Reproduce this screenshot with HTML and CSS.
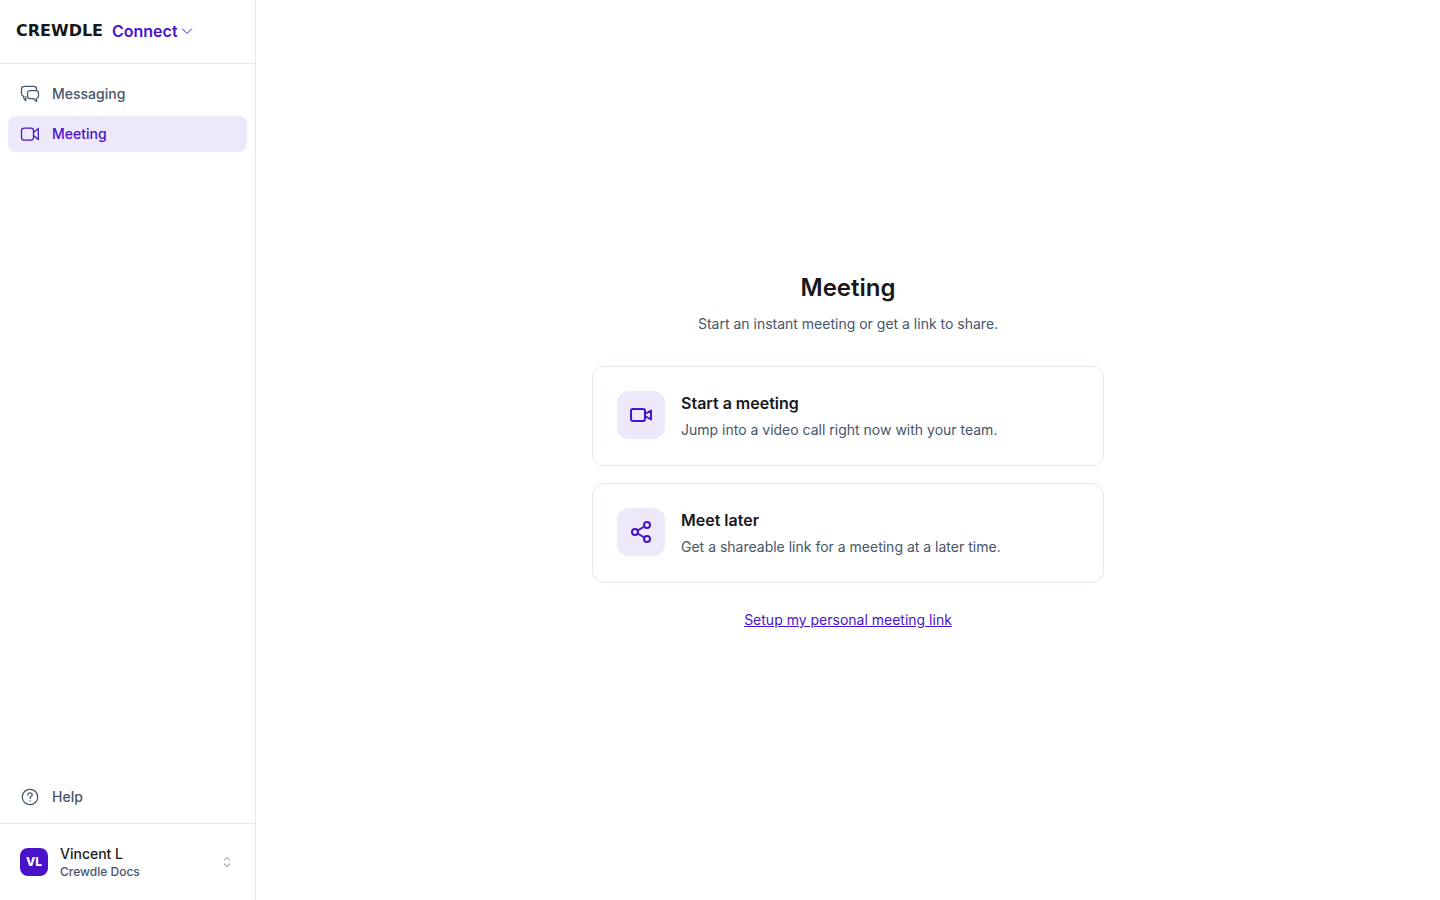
FILE: index.html
```html
<!DOCTYPE html>
<html lang="en">
<head>
  <meta charset="UTF-8">
  <meta name="viewport" content="width=device-width, initial-scale=1.0">
  <title>Crewdle Connect - Meeting</title>
  <link rel="stylesheet" href="styles.css">
</head>
<body>
  <!-- Sidebar -->
  <aside class="sidebar">
    <header class="sidebar-header">
      <button type="button" class="product-switch">
        <span class="logo">CREWDLE</span>
        <span class="product">Connect</span>
        <svg class="chevron" width="12" height="12" viewBox="0 0 12 12"><path d="M1.500 4 6 8.500 10.500 4"/></svg>
      </button>
    </header>

    <nav class="nav">
      <a href="#messaging" class="nav-item">
        <svg class="icon" width="20" height="20" viewBox="0 0 20 20">
          <path d="M5.800 12.500V16.500L3.800 14.500V12.300C2.300 11.900 1.500 10.900 1.500 9.500V5C1.500 3.200 2.700 2.300 4.500 2.300H13.500C15.300 2.300 16.500 3.200 16.500 5V6.300"/>
          <path d="M10 6.500H16C17.600 6.500 18.500 7.400 18.500 9V12C18.500 13.400 17.800 14.200 16.500 14.500V17.500L13.500 14.500H10C8.400 14.500 7.500 13.600 7.500 12V9C7.500 7.400 8.400 6.500 10 6.500Z"/>
        </svg>
        Messaging
      </a>
      <a href="#meeting" class="nav-item active">
        <svg class="icon" width="20" height="20" viewBox="0 0 20 20">
          <rect x="1.500" y="4" width="12" height="12" rx="2.500"/>
          <path d="M13.500 8.500 18.300 4.500V15.500L13.500 11.500"/>
        </svg>
        Meeting
      </a>
    </nav>

    <nav class="nav nav-bottom">
      <a href="#help" class="nav-item">
        <svg class="icon" width="20" height="20" viewBox="0 0 20 20">
          <circle cx="10" cy="10" r="7.700"/>
          <path d="M7.800 8C7.800 6.700 8.700 5.900 10 5.900S12.200 6.700 12.200 7.900C12.200 9.600 10 9.600 10 11.400"/>
          <path d="M10 13.800V14"/>
        </svg>
        Help
      </a>
    </nav>

    <footer class="sidebar-footer">
      <button type="button" class="account">
        <span class="avatar">VL</span>
        <span class="account-text">
          <span class="account-name">Vincent L</span>
          <span class="account-org">Crewdle Docs</span>
        </span>
        <svg class="sort" width="12" height="12" viewBox="0 0 12 12"><path d="M3.300 4 6 1.500 8.700 4M3.300 8 6 10.500 8.700 8"/></svg>
      </button>
    </footer>
  </aside>

  <!-- Main content -->
  <main class="main">
    <div class="meeting">
      <h1>Meeting</h1>
      <p class="subtitle">Start an instant meeting or get a link to share.</p>

      <div class="cards">
        <button type="button" class="card">
          <span class="card-icon">
            <svg width="24" height="24" viewBox="0 0 24 24">
              <rect x="2" y="6" width="14" height="12" rx="2"/>
              <path d="M16 11 22 7.500V16.500L16 13"/>
            </svg>
          </span>
          <span class="card-text">
            <span class="card-title">Start a meeting</span>
            <span class="card-desc">Jump into a video call right now with your team.</span>
          </span>
        </button>
        <button type="button" class="card">
          <span class="card-icon">
            <svg width="24" height="24" viewBox="0 0 24 24">
              <circle cx="18" cy="5" r="3"/>
              <circle cx="6" cy="12" r="3"/>
              <circle cx="18" cy="19" r="3"/>
              <path d="M8.600 13.500 15.400 17.500M15.400 6.500 8.600 10.500"/>
            </svg>
          </span>
          <span class="card-text">
            <span class="card-title">Meet later</span>
            <span class="card-desc">Get a shareable link for a meeting at a later time.</span>
          </span>
        </button>
      </div>

      <a href="#personal-link" class="personal-link">Setup my personal meeting link</a>
    </div>
  </main>
</body>
</html>
```
FILE: styles.css
```css
/* Reset */
* {
  margin: 0;
  padding: 0;
  box-sizing: border-box;
}

body {
  display: flex;
  min-height: 100vh;
  background-color: #fff;
  color: #18181b;
  font-family: Inter, "Liberation Sans", sans-serif;
  font-size: 14px;
}

button {
  background: none;
  border: none;
  color: inherit;
  font: inherit;
  text-align: left;
  cursor: pointer;
}

svg {
  flex-shrink: 0;
  fill: none;
  stroke: currentColor;
  stroke-linecap: round;
  stroke-linejoin: round;
}

/* Sidebar */
.sidebar {
  display: flex;
  flex-direction: column;
  flex-shrink: 0;
  width: 256px;
  border-right: 1px solid #e2e8f0;
}

.sidebar-header {
  display: flex;
  align-items: center;
  height: 64px;
  padding: 0 16px 1px;
  border-bottom: 1px solid #e2e8f0;
}

.product-switch {
  display: flex;
  align-items: center;
}

.logo {
  min-width: 88px;
  margin-right: 8px;
  font-family: "DejaVu Sans", sans-serif;
  font-size: 16px;
  font-weight: bold;
  line-height: 24px;
}

.product {
  margin-right: 3px;
  color: #4913ca;
  font-size: 16px;
  font-weight: 600;
  line-height: 24px;
}

.chevron {
  color: #4913ca;
}

/* Navigation */
.nav {
  display: flex;
  flex-direction: column;
  gap: 4px;
  padding: 12px 8px;
}

.nav-bottom {
  margin-top: auto;
  padding: 8px;
}

.nav-item {
  display: flex;
  align-items: center;
  gap: 12px;
  height: 36px;
  padding: 0 12px;
  border-radius: 8px;
  color: #475569;
  font-weight: 500;
  line-height: 20px;
  text-decoration: none;
}

.nav-item.active {
  background-color: #ede8fa;
  color: #4913ca;
}

.icon {
  stroke-width: 1.25;
}

/* Account */
.sidebar-footer {
  padding: 16px 8px;
  border-top: 1px solid #e2e8f0;
}

.account {
  display: flex;
  align-items: center;
  gap: 12px;
  width: 100%;
  height: 44px;
  padding: 0 14px 0 12px;
}

.avatar {
  width: 28px;
  height: 28px;
  border-radius: 8px;
  background-color: #4913ca;
  color: #fff;
  font-size: 12px;
  font-weight: 800;
  line-height: 28px;
  text-align: center;
}

.account-text {
  flex: 1;
  padding-top: 2px;
}

.account-name,
.account-org {
  display: block;
  font-weight: 500;
  line-height: 18px;
}

.account-org {
  color: #475569;
  font-size: 12px;
}

.sort {
  color: #7c8799;
}

/* Main content */
.main {
  display: flex;
  flex: 1;
  align-items: center;
  justify-content: center;
  padding: 24px;
}

.meeting {
  display: flex;
  flex-direction: column;
  align-items: center;
  width: 100%;
  max-width: 512px;
}

h1 {
  font-size: 24px;
  font-weight: 600;
  line-height: 38px;
}

.subtitle {
  margin: 6px 0 31px;
  color: #475569;
  line-height: 22px;
}

.cards {
  display: flex;
  flex-direction: column;
  gap: 17px;
  width: 100%;
}

.card {
  display: flex;
  gap: 16px;
  padding: 24px;
  border: 1px solid #e2e8f0;
  border-radius: 12px;
}

.card-icon {
  display: flex;
  align-items: center;
  justify-content: center;
  width: 48px;
  height: 48px;
  border-radius: 12px;
  background-color: #ede8fa;
  color: #4913ca;
  stroke-width: 2px;
}

.card-title,
.card-desc {
  display: block;
}

.card-title {
  margin-bottom: 4px;
  font-size: 16px;
  font-weight: 600;
  line-height: 24px;
}

.card-desc {
  color: #475569;
  line-height: 22px;
}

.personal-link {
  margin-top: 26px;
  color: #4913ca;
  line-height: 22px;
}
```
